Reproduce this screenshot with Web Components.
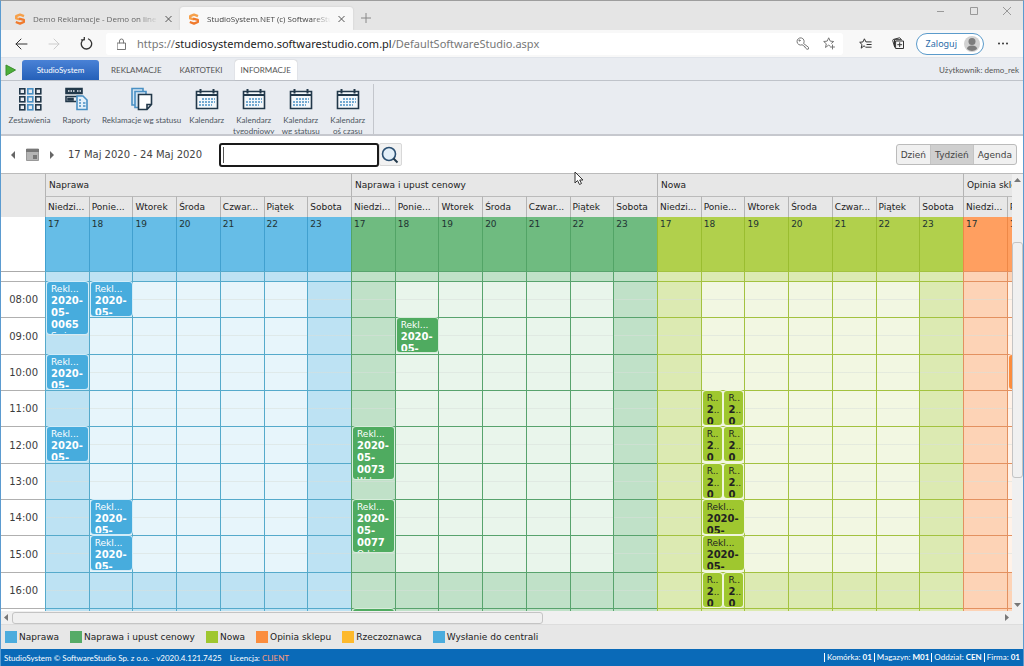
<!DOCTYPE html>
<html lang="pl">
<head>
<meta charset="utf-8">
<title>StudioSystem.NET (c) SoftwareStudio</title>
<style>
html, body { margin: 0; height: 100%; }
body { font-family: "DejaVu Sans", sans-serif; font-size: 9px; color: #3c3c3c; background: #fff; }
</style>
</head>
<body>
<app-window>
  <browser-tabs slot="chrome"></browser-tabs>
  <browser-toolbar slot="chrome"></browser-toolbar>
  <app-ribbon></app-ribbon>
  <calendar-toolbar></calendar-toolbar>
  <resource-scheduler>
    <resource-group label="Naprawa" tone="blue">
      <calendar-event day="1" hour="8" number="0065" note="Swi" long></calendar-event>
      <calendar-event day="2" hour="8"></calendar-event>
      <calendar-event day="1" hour="10"></calendar-event>
      <calendar-event day="1" hour="12"></calendar-event>
      <calendar-event day="2" hour="14"></calendar-event>
      <calendar-event day="2" hour="15"></calendar-event>
    </resource-group>
    <resource-group label="Naprawa i upust cenowy" tone="green">
      <calendar-event day="2" hour="9"></calendar-event>
      <calendar-event day="1" hour="12" number="0073" note="Wd" long></calendar-event>
      <calendar-event day="1" hour="14" number="0077" note="Od i" long></calendar-event>
      <calendar-event day="1" hour="17" empty></calendar-event>
    </resource-group>
    <resource-group label="Nowa" tone="lime">
      <calendar-event day="2" hour="11" half="left"></calendar-event>
      <calendar-event day="2" hour="11" half="right"></calendar-event>
      <calendar-event day="2" hour="12" half="left"></calendar-event>
      <calendar-event day="2" hour="12" half="right"></calendar-event>
      <calendar-event day="2" hour="13" half="left"></calendar-event>
      <calendar-event day="2" hour="13" half="right"></calendar-event>
      <calendar-event day="2" hour="14"></calendar-event>
      <calendar-event day="2" hour="15"></calendar-event>
      <calendar-event day="2" hour="16" half="left"></calendar-event>
      <calendar-event day="2" hour="16" half="right"></calendar-event>
    </resource-group>
    <resource-group label="Opinia sklepu" tone="orange">
      <calendar-event day="2" hour="10" empty></calendar-event>
    </resource-group>
  </resource-scheduler>
  <status-legend></status-legend>
  <app-footer></app-footer>
</app-window>

<script>
const define = (name, html, setup) => {
  const template = document.createElement('template');
  template.innerHTML = html;
  customElements.define(name, class extends HTMLElement {
    constructor() {
      super();
      this.attachShadow({ mode: 'open' }).append(template.content.cloneNode(true));
    }
    connectedCallback() {
      if (setup && !this.ready) { this.ready = true; setup(this, this.shadowRoot); }
    }
  });
};

define('app-window', `
<style>
:host { display: flex; flex-direction: column; height: 100vh; box-sizing: border-box; overflow: hidden;
  border: solid #5b9bd0; border-width: 1px 1px 0; border-top-color: #9d9d9d; }
</style>
<slot name="chrome"></slot><slot></slot>`);

define('s-logo', `
<style>:host { display: block; width: 12px; height: 12px; } svg { display: block; }</style>
<svg width="12" height="12" viewBox="0 0 12 12" fill="none" stroke-width="2.4" stroke-linejoin="round">
  <path d="M10 3.2 6 1.6 2.2 3.2V5.4L6 6.3" stroke="#f6a04a"/>
  <path d="M5 5.6 9.8 6.8V9L6 10.6 1.8 9" stroke="#f07a2c"/>
</svg>`);

define('browser-tabs', `
<style>
:host { display: flex; align-items: flex-end; flex: none; height: 29px; background: #e5e5e5;
  font-family: "Open Sans", sans-serif; font-size: 8px; color: #666; }
.tab { display: flex; align-items: center; gap: 7px; width: 173px; height: 23px; box-sizing: border-box;
  padding: 0 8px; border-radius: 3px 3px 0 0; }
.tab.first { width: 179px; padding-left: 13px; }
.active { background: #f8f8f8; color: #444; box-shadow: 0 0 2px #c4c4c4; }
.tab span { flex: 1; overflow: hidden; white-space: nowrap;
  -webkit-mask-image: linear-gradient(90deg, #000 85%, transparent); mask-image: linear-gradient(90deg, #000 85%, transparent); }
button { border: 0; background: none; padding: 0; display: block; height: 10px; }
svg { display: block; fill: none; stroke: #555; }
.new { margin: 0 0 7px 8px; }
.new svg { stroke: #888; }
.win { margin-left: auto; align-self: flex-start; display: flex; gap: 23px; padding: 5px 11px 0 0; }
.win svg { stroke: #999; }
</style>
<div class="tab first"><s-logo></s-logo><span>Demo Reklamacje - Demo on line</span>
  <button aria-label="Zamknij kartę"><svg width="7" height="10"><path d="M.5 2 6.500 8M6.500 2 .5 8"/></svg></button></div>
<div class="tab active"><s-logo></s-logo><span>StudioSystem.NET (c) SoftwareStudio</span>
  <button aria-label="Zamknij kartę"><svg width="7" height="10"><path d="M.5 2 6.500 8M6.500 2 .5 8"/></svg></button></div>
<button class="new" aria-label="Nowa karta"><svg width="10" height="10"><path d="M5 0V10M0 5H10"/></svg></button>
<div class="win">
  <button aria-label="Minimalizuj"><svg width="10" height="10"><path d="M1 5.500H8"/></svg></button>
  <button aria-label="Maksymalizuj"><svg width="10" height="10"><path d="M1.500 1.500H8.500V8.500H1.500Z"/></svg></button>
  <button aria-label="Zamknij"><svg width="10" height="10"><path d="M1 1 9 9M9 1 1 9"/></svg></button>
</div>`);

define('browser-toolbar', `
<style>
:host { display: flex; align-items: center; flex: none; height: 28px; background: #f8f8f8; box-sizing: border-box;
  padding: 0 14px; color: #333; border-bottom: 1px solid #e0e4ea; }
svg { display: block; fill: none; stroke: currentColor; stroke-linecap: round; stroke-linejoin: round; }
button { border: 0; background: none; padding: 0; color: inherit; font: inherit; display: block; }
.nav { display: flex; gap: 20px; width: 91px; }
.off { color: #ccc; }
.address { flex: 1; display: flex; align-items: center; height: 22px; box-sizing: border-box; background: #fff;
  border-radius: 3px; padding: 0 8px 0 11px; color: #777; }
.url { flex: 1; padding-left: 11px; font: 11px/16px "Noto Sans", sans-serif; white-space: nowrap; }
.url b { font-weight: 400; color: #222; }
.address button + button { margin-left: 14px; }
.tools { display: flex; align-items: center; gap: 20px; padding: 0 12px 0 16px; }
.login { display: flex; align-items: center; gap: 7px; height: 22px; box-sizing: border-box; border: 1px solid #5b9bcb;
  border-radius: 11px; padding: 0 3px 0 9px; color: #2b6ca8; background: #fff; font: 9px/20px "Noto Sans", sans-serif; }
.more { margin-left: 13px; }
.solid { stroke: none; fill: #333; }
</style>
<div class="nav">
  <button aria-label="Wstecz"><svg width="13" height="14"><path d="M12 7H1M6 2 1 7 6 12"/></svg></button>
  <button class="off" aria-label="Dalej"><svg width="12" height="14"><path d="M1 7H11M6 2 11 7 6 12"/></svg></button>
  <button aria-label="Odśwież"><svg width="13" height="14" stroke-width="1.300"><path d="M8.500 2A5.200 5.200 0 1 1 4 2.200M4.300 0V2.800H1.500"/></svg></button>
</div>
<div class="address">
  <svg width="9" height="12"><path d="M.5 5H8.500V11.500H.5ZM2.500 5V3A2 2 0 0 1 6.500 3V5"/></svg>
  <span class="url">https://<b>studiosystemdemo.softwarestudio.com.pl</b>/DefaultSoftwareStudio.aspx</span>
  <button aria-label="Hasła"><svg width="13" height="13"><path d="M7.800 6.200A3.600 3.600 0 1 0 6 7.800L7.200 8.200 8 9.400 9 9.800 9.500 11 11 12.300 12.500 12V10.700Z"/><circle cx="3.500" cy="3.500" r=".6"/></svg></button>
  <button aria-label="Dodaj do ulubionych"><svg width="12" height="13"><path d="M7 9 5.500 8.200 2.500 10.500 3.300 6.800.7 4.500 4.200 4.100 5.700.8 7.200 4.100 10.700 4.500 8.500 6.300M9.500 8V12M7.500 10H11.500"/></svg></button>
</div>
<div class="tools">
  <button aria-label="Ulubione"><svg width="13" height="12"><path d="M6 8.500 5 7.800 2.200 10.200 3 6.500.7 4.300 4 3.900 5.400.8 6.900 3.900H12.200M8 6.500H12.200M7 9.200H12.200"/></svg></button>
  <button aria-label="Kolekcje"><svg width="12" height="13"><path d="M4 4H11.500V11.500H4ZM2.500 9.500.7 3.500 1.200 2.500 7.500.8 8.500 1.500M2.500 10V2.700H9.500M7.700 5.700V9.700M5.700 7.700H9.700"/></svg></button>
</div>
<button class="login">Zaloguj <svg class="solid" width="16" height="16"><circle cx="8" cy="8" r="8" fill="#d2d2d2"/><circle cx="8" cy="5.500" r="3.500" fill="#7d7d7d"/><path d="M3 13Q3 9.500 8 9.500T13 13Q8 17 3 13" fill="#7d7d7d"/></svg></button>
<button class="more" aria-label="Więcej"><svg class="solid" width="12" height="3"><circle cx="2" cy="1.500" r="1"/><circle cx="6" cy="1.500" r="1"/><circle cx="10" cy="1.500" r="1"/></svg></button>`);

define('ribbon-icon', `
<style>:host { display: block; height: 24px; } svg { display: block; fill: none; stroke: #22384a; stroke-width: 1.600; } .b { stroke: #4a90c4; }</style>
<svg width="24" height="24"></svg>`, (el, root) => {
  const art = {
    grid: [2, 10, 18].map(y => [2, 10, 18].map((x, i) =>
      `<rect x="${x - .2}" y="${y - .2}" width="5" height="5" ${i === 1 ? 'class="b"' : ''}/>`).join('')).join(''),
    reports: `<path d="M1 1.500H17V6.500H1Z" fill="#22384a"/><path d="M3 4H10M12 4H16" stroke="#e9ecf1" stroke-dasharray="1.500 1"/>
      <path d="M17 9.500H1V14.500H11"/><path d="M3 11.500H8V13H3Z" fill="#22384a"/>
      <path class="b" d="M12 22.500V9H18L22 13V22.500Z" fill="#e4f0fa"/><path class="b" d="M14 13H16M14 16H16M14 19H16M18 16H20.500M18 19H20.500"/>`,
    files: `<path class="b" d="M5 18H2V1.500H13V4M8 20.500H5V4.500H16V7" fill="#d4e6f4"/>
      <path d="M8.500 7.500H21.500V17.500L17 22.500H8.500ZM21.500 17.500H17V22.500" fill="#fff"/>`,
    calendar: `<path d="M1.500 4.500H22.500V21.500H1.500Z" fill="#f4f8fb"/><path d="M1.500 8H22.500M5.500 2V6.500M18.500 2V6.500" stroke-width="2"/>
      <path class="b" d="M7 12H20M4 15H20M4 18H17" stroke-dasharray="2 1"/>`
  };
  root.querySelector('svg').innerHTML = art[el.getAttribute('name')];
});

define('ribbon-button', `
<style>
:host { display: block; }
button { display: flex; flex-direction: column; align-items: center; gap: 4px; min-width: 47px; padding: 0 2px; border: 0;
  background: none; font: 8px/11px Lato, sans-serif; color: #4c5560; }
</style>
<button><ribbon-icon></ribbon-icon><span><slot></slot></span></button>`, (el, root) => {
  const icon = document.createElement('ribbon-icon');
  icon.setAttribute('name', el.getAttribute('icon'));
  root.querySelector('ribbon-icon').replaceWith(icon);
});

define('app-ribbon', `
<style>
:host { display: block; flex: none; background: #e9ecf1; font: 8px/20px Lato, sans-serif; color: #555;
  border-bottom: 2px solid #c6c8ce; }
nav { display: flex; align-items: flex-end; height: 22px; border-bottom: 1px solid #bfc3ca; }
.play { width: 11px; margin: 0 6px 4px 4px; display: block; }
a { color: inherit; text-decoration: none; text-align: center; padding: 0 6px; border-radius: 3px 3px 0 0; }
a.app { width: 65px; margin-right: 6px; background: linear-gradient(#4a82d6, #2560b8); color: #fff; }
a.on { background: #fff; box-shadow: 0 0 1px #999; }
.menu { display: flex; gap: 6px; }
.user { margin-left: auto; padding-right: 4px; }
.panel { display: flex; height: 53px; overflow: hidden; padding-left: 5px; }
.group { display: flex; padding: 6px 2px 0 0; }
.sep { width: 1px; background: #c3c6cc; margin-top: 3px; }
</style>
<nav>
  <svg class="play" width="11" height="12"><path d="M1 1 10.500 6 1 11.500Z" fill="#4caf3a" stroke="#3b8f2e"/></svg>
  <a class="app" href="#">StudioSystem</a>
  <div class="menu"><a href="#">REKLAMACJE</a><a href="#">KARTOTEKI</a><a class="on" href="#">INFORMACJE</a></div>
  <span class="user">Użytkownik: demo_rek</span>
</nav>
<div class="panel">
  <div class="group">
    <ribbon-button icon="grid">Zestawienia</ribbon-button>
    <ribbon-button icon="reports">Raporty</ribbon-button>
    <ribbon-button icon="files">Reklamacje wg statusu</ribbon-button>
    <ribbon-button icon="calendar">Kalendarz</ribbon-button>
    <ribbon-button icon="calendar">Kalendarz<br>tygodniowy</ribbon-button>
    <ribbon-button icon="calendar">Kalendarz<br>wg statusu</ribbon-button>
    <ribbon-button icon="calendar">Kalendarz<br>oś czasu</ribbon-button>
  </div>
  <div class="sep"></div>
</div>`);

define('calendar-toolbar', `
<style>
:host { display: flex; align-items: center; flex: none; height: 37px; background: #fff; padding: 0 6px 0 9px; color: #444; position: relative; }
button { border: 0; background: none; padding: 0; font: inherit; color: inherit; display: block; }
svg { display: block; }
.nav { display: flex; align-items: center; gap: 10px; width: 58px; }
.range { width: 151px; font-size: 10px; white-space: nowrap; }
input { width: 160px; height: 24px; box-sizing: border-box; border: 2px solid #1a1a1a; border-radius: 3px; padding: 0 4px; font: inherit; outline: 0;
  background: linear-gradient(#555, #555) 2px 2px / 1px 16px no-repeat #fff; }
.find { width: 23px; height: 23px; background: #f2f2f2; border: 1px solid #d8d8d8; border-radius: 2px; }
.views { margin-left: auto; display: flex; border: 1px solid #bbb; border-radius: 3px; background: #f0f0f0; overflow: hidden; }
.views button { height: 19px; padding: 0 4px; }
.views .on { background: #cfcfcf; }
.views button + button { border-left: 1px solid #c4c4c4; }
.pointer { position: absolute; left: 573px; top: 35px; z-index: 5; }
</style>
<div class="nav">
  <button aria-label="Poprzedni tydzień"><svg width="6" height="8"><path d="M5 0V8L1 4Z" fill="#666"/></svg></button>
  <button aria-label="Wybierz datę"><svg width="13" height="13"><path d="M.5 1H12.500V12.500H.5Z" fill="#b4b4b4" stroke="#999"/><path d="M0 1H13V4H0Z" fill="#777"/><path d="M7 7H11V11H7Z" fill="#777"/></svg></button>
  <button aria-label="Następny tydzień"><svg width="6" height="8"><path d="M1 0V8L5 4Z" fill="#666"/></svg></button>
</div>
<span class="range">17 Maj 2020 - 24 Maj 2020</span>
<input type="text" aria-label="Szukaj">
<button class="find" aria-label="Szukaj"><svg width="20" height="20" fill="none"><circle cx="9" cy="9" r="6.500" fill="#e3eff8" stroke="#2a4f72" stroke-width="1.600"/><path d="M13.500 13.500 17.500 17.500" stroke="#22384a" stroke-width="2"/></svg></button>
<div class="views"><button>Dzień</button><button class="on">Tydzień</button><button>Agenda</button></div>
<svg class="pointer" width="10" height="15"><path d="M1 1V12L3.500 9.500 5.500 13.500 7.500 12.500 5.700 9H9Z" fill="#fff" stroke="#333"/></svg>`);

define('scroll-track', `
<style>
:host { display: flex; align-items: center; background: #f0f0f0; overflow: hidden; }
:host([axis="y"]) { flex-direction: column; }
.thumb { border: 1px solid #c4c4c4; border-radius: 3px; background: #f0f0f0; box-sizing: border-box; }
:host([axis="x"]) .thumb { height: 12px; flex: 15; }
:host([axis="x"]) .fill { flex: 13; }
:host([axis="y"]) .thumb { width: 11px; height: 54%; }
:host([axis="y"]) .fill { flex: 1; }
:host([axis="y"]) .lead { height: 56px; flex: none; }
svg { display: block; flex: none; fill: #777; }
</style>
<svg width="11" height="12" class="a"></svg><div class="lead"></div><div class="thumb"></div><div class="fill"></div><svg width="11" height="12" class="z"></svg>`, (el, root) => {
  const y = el.getAttribute('axis') === 'y';
  root.querySelector('.a').innerHTML = y ? '<path d="M2 8H9L5.500 4Z"/>' : '<path d="M7 2V9L3 5.500Z"/>';
  root.querySelector('.z').innerHTML = y ? '<path d="M2 4H9L5.500 8Z"/>' : '<path d="M4 2V9L8 5.500Z"/>';
});

define('calendar-event', `
<style>
:host { position: relative; display: block; box-sizing: border-box; height: 34px; margin: 1px 0 0 2px; padding: 1px 2px 1px 4px; width: 41px;
  border-radius: 3px; background: var(--event); color: var(--ink); font-size: 9px; line-height: 12px;
  box-shadow: 0 0 0 1px var(--halo); align-self: start; }
:host([long]) { height: 52px; padding-bottom: 0; }
:host([half]) { width: 19px; padding-right: 1px; }
:host([half="right"]) { justify-self: end; margin-right: 1px; }
.clip { height: 100%; overflow: hidden; }
.line { display: block; white-space: nowrap; }
.note { line-height: 10px; }
b { font-size: 10px; }
</style>
<div class="clip"></div>`, (el, root) => {
  const day = +el.getAttribute('day'), row = +el.getAttribute('hour') - 7;
  el.style.gridArea = `${row} / ${day} / span ${el.hasAttribute('long') ? 2 : 1} / span 1`;
  if (el.hasAttribute('empty')) return;
  const lines = el.hasAttribute('half') ? ['R..', '<b>2</b>..', '<b>0</b>..'] : ['Rekl...', '<b>2020-</b>', '<b>05-</b>'];
  if (el.hasAttribute('long')) lines.push(`<b>${el.getAttribute('number')}</b>`);
  let html = lines.map(l => `<span class="line">${l}</span>`).join('');
  if (el.hasAttribute('note')) html += `<span class="line note">${el.getAttribute('note')}</span>`;
  root.querySelector('.clip').innerHTML = html;
});

define('resource-group', `
<style>
:host { display: block; flex: 0 0 306px; overflow: hidden; }
:host([tone="blue"]) { --deep: #66bde7; --mid: #bde2f3; --pale: #e7f5fb; --line: #55aacb; --edge: #41a0cf; --event: #47acdd; --ink: #fff; --halo: #d2ecf8; }
:host([tone="green"]) { --deep: #6fbb80; --mid: #c0e1c8; --pale: #e9f5eb; --line: #58a36d; --edge: #52a466; --event: #4fab60; --ink: #fff; --halo: #d6ecda; }
:host([tone="lime"]) { --deep: #b1d04c; --mid: #dceab2; --pale: #f2f7e2; --line: #a3c23f; --edge: #9abd30; --event: #9fc72f; --ink: #222; --halo: #f0f6dc; }
:host([tone="orange"]) { --deep: #ff9f60; --mid: #fdd3b6; --pale: #fff2e8; --line: #e39160; --edge: #ee8847; --event: #fb8d3e; --ink: #222; --halo: #fde6d6; }
.name, .days div { background: #e7e7e7; border-left: 1px solid #b4b4b4; border-top: 1px solid #bbb; box-sizing: border-box; overflow: hidden; white-space: nowrap; }
.name { height: 23px; line-height: 22px; padding-left: 3px; color: #222; }
.days, .all, .gap, .hours { display: grid; grid-template-columns: repeat(7, 1fr); }
.days div { height: 21px; line-height: 20px; padding-left: 2px; color: #222; }
.all div { height: 54px; box-sizing: border-box; background: var(--deep); border-left: 1px solid var(--edge); padding: 1px 0 0 2px; line-height: 12px; color: #233; }
.gap div, .cell { border: solid var(--line); border-width: 1px 0 0 1px; background: var(--mid); box-sizing: border-box; }
.gap div { height: 10px; }
.hours { grid-template-rows: repeat(4, 36px 37px 36px); }
.cell { background: linear-gradient(#d8dfda88, #d8dfda88) 0 17px / 100% 1px no-repeat var(--mid); }
.work { background-color: var(--pale); }
</style>
<div class="name"></div><div class="days"></div><div class="all"></div><div class="gap"></div>
<div class="hours"><slot></slot></div>`, (el, root) => {
  const $ = s => root.querySelector(s);
  const names = ['Niedzi...', 'Ponie...', 'Wtorek', 'Środa', 'Czwar...', 'Piątek', 'Sobota'];
  $('.name').textContent = el.getAttribute('label');
  $('.days').innerHTML = names.map(n => `<div>${n}</div>`).join('');
  $('.all').innerHTML = names.map((n, i) => `<div>${17 + i}</div>`).join('');
  $('.gap').innerHTML = '<div></div>'.repeat(7);
  let cells = '';
  for (let r = 1; r <= 12; r++)
    for (let c = 1; c <= 7; c++)
      cells += `<div class="cell ${r < 9 && c > 1 && c < 7 ? 'work' : ''}" style="grid-area:${r}/${c}"></div>`;
  $('.hours').insertAdjacentHTML('afterbegin', cells);
});

define('resource-scheduler', `
<style>
:host { display: flex; flex-direction: column; flex: 1; min-height: 0; background: #fff; }
.main { display: flex; flex: 1; min-height: 0; }
.axis { flex: 0 0 44px; overflow: hidden; }
.corner { height: 44px; box-sizing: border-box; background: #e7e7e7; border-top: 1px solid #bbb; }
.blank { height: 54px; }
.slack { height: 10px; box-sizing: border-box; border-top: 1px solid #aaa; }
.times { display: grid; grid-template-rows: repeat(4, 36px 37px 36px); }
.times time { border-top: 1px solid #b0b0b0; display: flex; align-items: center; justify-content: flex-end; padding-right: 7px; font-size: 10px; box-sizing: border-box; }
.groups { flex: 1; display: flex; overflow: hidden; min-width: 0; }
scroll-track[axis="y"] { flex: 0 0 11px; border-top: 1px solid #bbb; }
scroll-track[axis="x"] { flex: 0 0 13px; padding-right: 11px; }
</style>
<div class="main">
  <div class="axis"><div class="corner"></div><div class="blank"></div><div class="slack"></div><div class="times"></div></div>
  <div class="groups"><slot></slot></div>
  <scroll-track axis="y"></scroll-track>
</div>
<scroll-track axis="x"></scroll-track>`, (el, root) => {
  let t = '';
  for (let h = 8; h < 17; h++) t += `<time>${String(h).padStart(2, '0')}:00</time>`;
  root.querySelector('.times').innerHTML = t + '<time></time>';
});

define('status-legend', `
<style>
:host { display: flex; align-items: center; flex: none; height: 25px; background: #e7e7e7; border-top: 1px solid #ddd; box-sizing: border-box; padding-left: 4px; gap: 11px; color: #222; }
span { display: flex; align-items: center; gap: 2px; white-space: nowrap; }
i { width: 12px; height: 12px; background: var(--c); }
</style>
<span style="--c:#4bacdd"><i></i>Naprawa</span>
<span style="--c:#55ab67"><i></i>Naprawa i upust cenowy</span>
<span style="--c:#9fc72f"><i></i>Nowa</span>
<span style="--c:#fb8d3e"><i></i>Opinia sklepu</span>
<span style="--c:#fdb92c"><i></i>Rzeczoznawca</span>
<span style="--c:#4bacdd"><i></i>Wysłanie do centrali</span>`);

define('app-footer', `
<style>
:host { display: flex; align-items: center; flex: none; height: 17px; background: #0a6ab8; color: #fff; padding: 0 3px; font: 8px/16px Lato, sans-serif; white-space: nowrap; }
.lic { margin-left: 8px; }
.lic em { font-style: normal; color: #ff9a78; }
.info { margin-left: auto; display: flex; gap: 2px; }
.info span { border-left: 1px solid #fff; padding-left: 2px; line-height: 9px; }
.info b { font-weight: 700; }
</style>
<span>StudioSystem © SoftwareStudio Sp. z o.o. - v2020.4.121.7425</span>
<span class="lic">Licencja: <em>CLIENT</em></span>
<div class="info"><span>Komórka: <b>01</b></span><span>Magazyn: <b>M01</b></span><span>Oddział: <b>CEN</b></span><span>Firma: <b>01</b></span></div>`);
</script>
</body>
</html>
